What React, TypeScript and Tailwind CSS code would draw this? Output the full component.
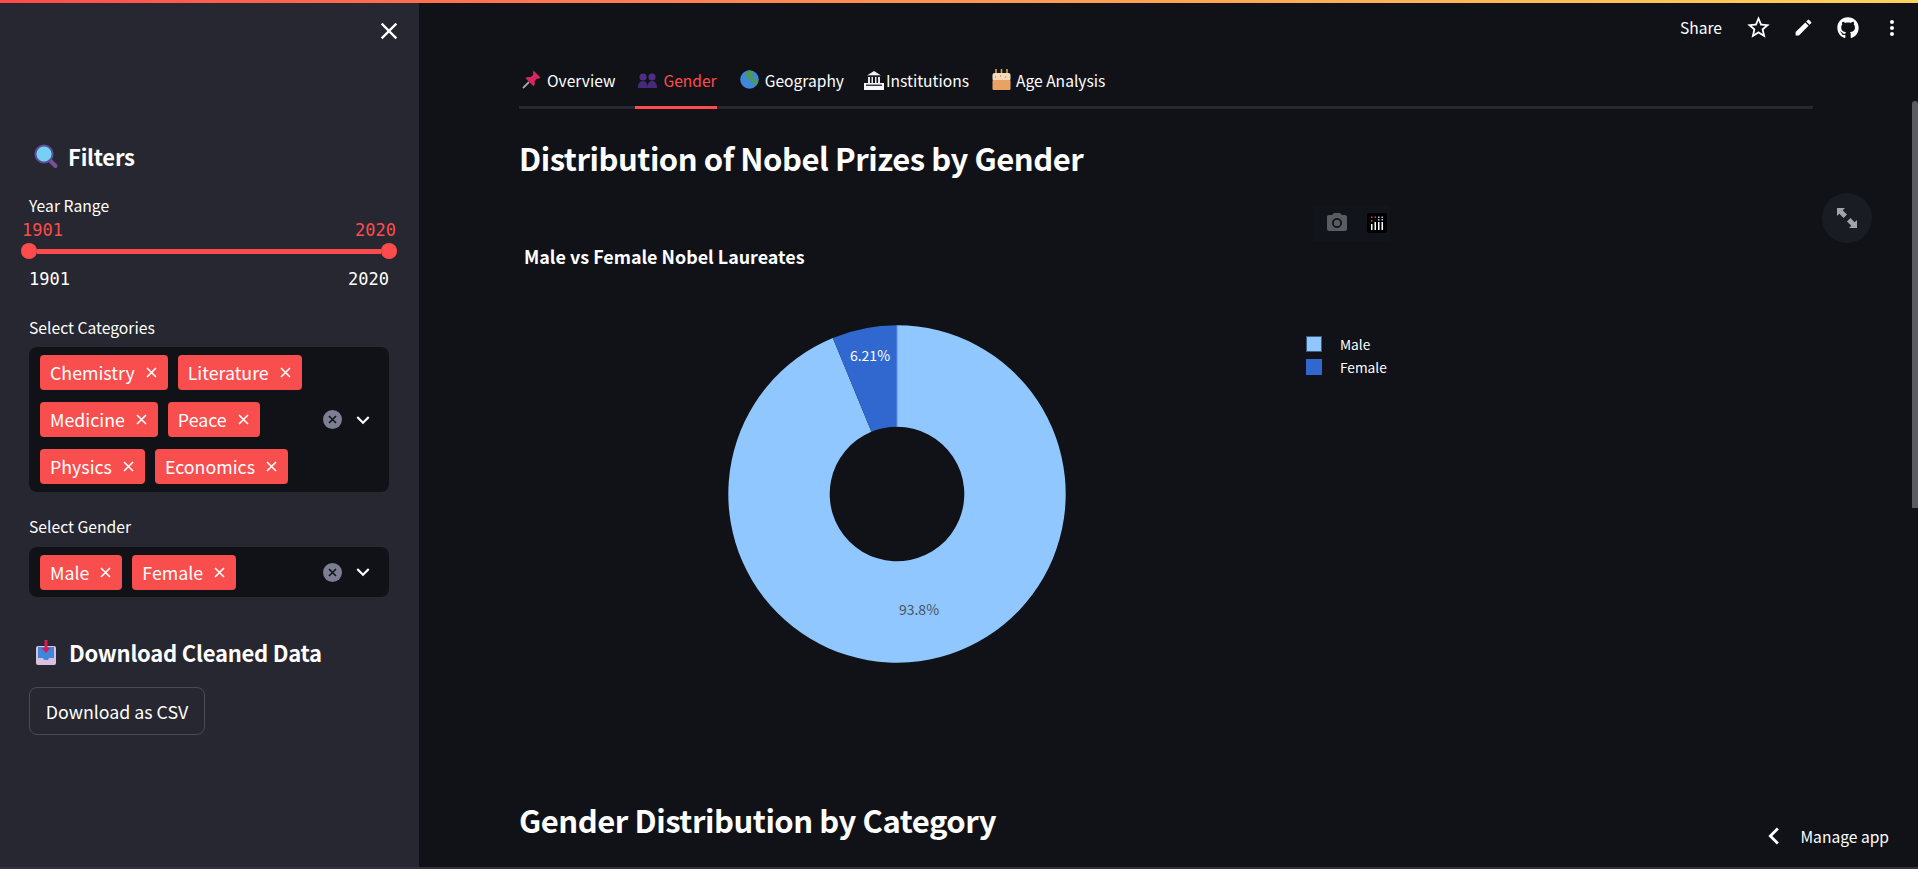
import React from "react";
import { MdClose, MdEdit, MdMoreVert, MdStarBorder, MdPhotoCamera, MdChevronLeft, MdKeyboardArrowDown } from "react-icons/md";
import { FaGithub } from "react-icons/fa";

const Search = () => (
  <svg width="25" height="25" viewBox="0 0 25 25" className="shrink-0">
    <path d="M15.500 16l6 6" stroke="#7a4f96" strokeWidth="4" strokeLinecap="round" />
    <circle cx="10" cy="10" r="8.600" fill="#76d0f1" stroke="#5b4f9e" strokeWidth="2" />
  </svg>
);
const Inbox = () => (
  <svg width="21" height="25" viewBox="0 0 21 25" className="shrink-0">
    <rect x="0" y="6" width="20" height="19" rx="2" fill="#d9bfe0" />
    <path d="M2 7h16v11h-5l-1 2H8l-1-2H2z" fill="#3f86dc" />
    <path d="M8.500 0h3v8h3l-4.500 5-4.500-5h3z" fill="#d01f56" />
  </svg>
);
const Pin = () => (
  <svg width="19" height="19" viewBox="0 0 19 19" className="shrink-0">
    <path d="M1 18l6-6" stroke="#a5a5ab" strokeWidth="1.800" />
    <path d="M11.500 0.500l7 7-2.500 1.500-1-.5-2.500 3c.8 2.200.2 3.500-1 4.800L3.500 8.300c1.300-1.200 2.700-1.800 4.900-1l3-2.500-.5-1z" fill="#d8265e" />
  </svg>
);
const People = () => (
  <svg width="19" height="18" viewBox="0 0 19 18" className="shrink-0">
    <circle cx="5" cy="6" r="3.600" fill="#4f2f86" />
    <circle cx="14" cy="6" r="3.600" fill="#4f2f86" />
    <path d="M0 17c0-5 2-7 5-7s4.500 2 4.500 7zM9.500 17c0-5 1.500-7 4.500-7s5 2 5 7z" fill="#452a78" />
  </svg>
);
const Globe = () => (
  <svg width="19" height="21" viewBox="0 0 19 21" className="shrink-0">
    <circle cx="9.500" cy="10.500" r="9.300" fill="#3f86dc" />
    <path d="M7 2c3-1 6 0 7 2l-2 3 2 3 4 0c0 3-1 5-3 7l-2-4-3-1-2-3-3-1 1-3z" fill="#4d9a58" />
  </svg>
);
const Bank = () => (
  <svg width="20" height="20" viewBox="0 0 20 20" className="shrink-0">
    <path d="M10 1l7 4.500H3z" fill="#f2f2f4" />
    <rect x="3" y="5.500" width="14" height="1" fill="#2c2c34" />
    <path d="M4 7h2v6H4zM7.500 7H9v6H7.500zM11 7h1.500v6H11zM14 7h2v6h-2z" fill="#e6e6ea" />
    <rect x="0" y="13" width="20" height="7" fill="#f8f8fa" />
    <rect x="2" y="14.500" width="16" height="1.500" fill="#3a3a44" />
  </svg>
);
const Cake = () => (
  <svg width="19" height="21" viewBox="0 0 19 21" className="shrink-0">
    <path d="M4 0v4M9.500 0v4M15 0v4" stroke="#d9b24c" strokeWidth="1.500" />
    <rect x="0.500" y="4" width="18" height="8" rx="2" fill="#f3dcb5" />
    <rect x="0.500" y="11" width="18" height="10" rx="1" fill="#e8a364" />
    <path d="M3 8h1M8 7h1M13 8h1" stroke="#d8577a" strokeWidth="1" />
  </svg>
);

const SmallX = () => (
  <svg width="11" height="11" viewBox="0 0 11 11" className="shrink-0">
    <path d="M1 1l9 9M10 1l-9 9" stroke="#fff" strokeWidth="1.600" />
  </svg>
);

const Tag = ({ label }: { label: string }) => (
  <span className="flex items-center h-[35px] rounded-[4px] bg-[#f84e4e] pl-[10px] pr-[11px] gap-[11px] text-white text-[17.800px] leading-[35px]">
    {label}
    <SmallX />
  </span>
);

const ClearAndChevron = () => (
  <div className="flex items-center gap-[8px] pr-[13px] shrink-0">
    <svg width="19" height="19" viewBox="0 0 19 19">
      <circle cx="9.500" cy="9.500" r="9.500" fill="#7c7f91" />
      <path d="M6 6l7 7M13 6l-7 7" stroke="#0e1117" strokeWidth="1.600" />
    </svg>
    <MdKeyboardArrowDown size={26} color="#fff" />
  </div>
);

const SelectBox = ({ labels, cls }: { labels: string[]; cls: string }) => (
  <div className={"flex items-center rounded-[8px] bg-[#101218] pl-[11px] " + cls}>
    <div className="flex flex-wrap flex-1 gap-x-[10px] gap-y-[12px] pr-[10px]">
      {labels.map((l) => (
        <Tag key={l} label={l} />
      ))}
    </div>
    <ClearAndChevron />
  </div>
);

const Tab = ({ icon, label, active, cls }: { icon: React.ReactNode; label: string; active?: boolean; cls: string }) => (
  <div className={"flex items-center h-[54px] pb-[2px] border-b-[3px] -mb-[3px] text-[15.600px] leading-[24px] " + cls + (active ? " border-[#ff4b4b] text-[#ff4b4b]" : " border-transparent text-white")}>
    {icon}
    <span>{label}</span>
  </div>
);

const polar = (r: number, deg: number) => {
  const a = ((deg - 90) * Math.PI) / 180;
  return [169 + r * Math.cos(a), 169 + r * Math.sin(a)];
};
const femaleDeg = 22.36;
const slice = (from: number, to: number) => {
  const [x1, y1] = polar(168.7, from);
  const [x2, y2] = polar(168.7, to);
  const [x3, y3] = polar(67.3, to);
  const [x4, y4] = polar(67.3, from);
  const large = to - from > 180 ? 1 : 0;
  return `M${x1} ${y1}A168.7 168.7 0 ${large} 1 ${x2} ${y2}L${x3} ${y3}A67.3 67.3 0 ${large} 0 ${x4} ${y4}Z`;
};

const Donut = () => (
  <svg width="338" height="338" viewBox="0 0 338 338" className="shrink-0">
    <path d={slice(0, 360 - femaleDeg)} fill="#90c7ff" />
    <path d={slice(360 - femaleDeg, 360)} fill="#3068cf" />
    <path d="M169 0.500V102" stroke="#5f93e2" strokeWidth="1" />
    <text x="142" y="36" textAnchor="middle" fill="#fff" fontSize="14">6.21%</text>
    <text x="191" y="290" textAnchor="middle" fill="#4a5360" fontSize="14">93.8%</text>
  </svg>
);

const PlotlyLogo = () => (
  <svg width="20" height="20" viewBox="0 0 20 20">
    <rect width="20" height="20" rx="2" fill="#000" />
    <path d="M4 11h1.500v6H4zM7.500 9H9v8H7.500zM11 9h1.500v8H11zM14.500 9H16v8h-1.500z" fill="#fff" />
    <path d="M4 3.500h1.500V5H4zM4 7h1.500v1.500H4zM7.500 3.500H9V5H7.500z" fill="#e0306f" />
    <path d="M11 3.500h1.500V5H11zM14.500 3.500H16V5h-1.500zM11 6h1.500v1.500H11zM14.500 6H16v1.500h-1.500z" fill="#b9c6de" />
  </svg>
);

const H2 = ({ children, cls }: { children: React.ReactNode; cls: string }) => (
  <h2 className={"text-[31px] tracking-[-0.45px] leading-[40px] font-semibold text-white " + cls}>{children}</h2>
);

export default function App() {
  return (
    <div className="w-[1918px] h-[869px] overflow-hidden flex flex-col bg-[#101218] text-white font-['Noto_Sans_CJK_SC','Noto_Sans',sans-serif]">
      <div className="h-[3px] shrink-0 bg-gradient-to-r from-[#ff4b4b] to-[#ffd35c]" />
      <div className="flex flex-1 min-h-0 relative">
        <aside className="w-[419px] shrink-0 bg-[#262730] pl-[29px] pr-[30px] flex flex-col">
          <div className="flex justify-end h-[54px] items-center -mr-[14px] pt-[2px]">
            <MdClose size={28} color="#fff" />
          </div>
          <div className="flex items-center gap-[9px] pl-[5px] mt-[84px] h-[30px] text-[22px] tracking-[-0.24px] font-semibold leading-[30px]">
            <Search />
            <span>Filters</span>
          </div>
          <div className="mt-[24px] text-[15.700px] leading-[22px]">Year Range</div>
          <div className="flex justify-between -mx-[7px] mt-[2px] font-['DejaVu_Sans_Mono',monospace] text-[17px] leading-[22px] text-[#ff4b4b]">
            <span>1901</span>
            <span>2020</span>
          </div>
          <div className="flex items-center -mx-[8px] mt-[2px]">
            <div className="w-4 h-4 rounded-full bg-[#ff4b4b] shrink-0" />
            <div className="flex-1 h-[5px] bg-[#ff4b4b]" />
            <div className="w-4 h-4 rounded-full bg-[#ff4b4b] shrink-0" />
          </div>
          <div className="flex justify-between mt-[9px] font-['DejaVu_Sans_Mono',monospace] text-[17px] leading-[22px]">
            <span>1901</span>
            <span>2020</span>
          </div>
          <div className="mt-[27px] mb-[8px] text-[15.700px] leading-[22px]">Select Categories</div>
          <SelectBox labels={["Chemistry", "Literature", "Medicine", "Peace", "Physics", "Economics"]} cls="h-[145px]" />
          <div className="mt-[24px] mb-[9px] text-[15.700px] leading-[22px]">Select Gender</div>
          <SelectBox labels={["Male", "Female"]} cls="h-[50px]" />
          <div className="flex items-center gap-[12px] pl-[7px] mt-[40px] h-[30px] text-[22px] tracking-[-0.24px] font-semibold leading-[30px]">
            <Inbox />
            <span>Download Cleaned Data</span>
          </div>
          <button className="mt-[20px] self-start h-[48px] w-[176px] rounded-[8px] border border-[#4a4b54] bg-[#262730] text-[17.800px] text-white flex items-center justify-center">
            Download as CSV
          </button>
        </aside>

        <main className="flex-1 min-w-0 flex flex-col pr-[105px]">
          <div className="pl-[100px]">
            <div className="h-[52px] -mr-[105px] flex items-center justify-end pr-[18px] pb-[3px]">
              <span className="text-[15.600px] mr-[23px]">Share</span>
              <MdStarBorder size={27} color="#fff" className="mr-[21px]" />
              <MdEdit size={21} color="#fff" className="mr-[23px]" />
              <FaGithub size={22} color="#fff" className="mr-[21px]" />
              <MdMoreVert size={24} color="#fff" className="-mr-[4px]" />
            </div>
            <div className="flex gap-[20px] border-b-[3px] border-[#262730] h-[54px]">
              <Tab icon={<Pin />} label="Overview" cls="pl-[3px] gap-[6px]" />
              <Tab icon={<People />} label="Gender" cls="pl-[3px] gap-[6px]" active />
              <Tab icon={<Globe />} label="Geography" cls="pl-[3px] gap-[6px]" />
              <Tab icon={<Bank />} label="Institutions" cls="gap-[2px]" />
              <Tab icon={<Cake />} label="Age Analysis" cls="pl-[3px] gap-[5px]" />
            </div>
            <H2 cls="mt-[29px]">Distribution of Nobel Prizes by Gender</H2>
            <div className="mt-[66px] pl-[5px] text-[17.900px] leading-[24px] font-bold">Male vs Female Nobel Laureates</div>
            <div className="flex mt-[57px] pl-[209px] items-start">
              <Donut />
              <div className="ml-[240px] mt-[11px] flex flex-col gap-[7px] text-[13.700px] leading-[16px]">
                <div className="flex items-center gap-[18px]">
                  <span className="w-4 h-4 bg-[#90c7ff] border border-[#3f5c80]" />
                  Male
                </div>
                <div className="flex items-center gap-[18px]">
                  <span className="w-4 h-4 bg-[#3068cf]" />
                  Female
                </div>
              </div>
            </div>
            <H2 cls="mt-[137px]">Gender Distribution by Category</H2>
          </div>
        </main>

        <div className="absolute left-[1313px] top-[202px] w-[77px] h-[36px] flex items-center gap-[18px] pl-[12px] bg-[#11141b]">
          <MdPhotoCamera size={24} color="#5b5c60" />
          <PlotlyLogo />
        </div>
        <div className="absolute left-[1822px] top-[190px] w-[50px] h-[50px] rounded-full bg-[#1a1c24] flex items-center justify-center">
          <svg width="20" height="20" viewBox="0 0 20 20" fill="#a3a4a8">
            <path d="M0 0h8L5.700 2.300 10 6.600 6.600 10 2.300 5.700 0 8zM20 20h-8l2.300-2.300L10 13.400 13.400 10l4.300 4.300L20 12z" />
          </svg>
        </div>
        <div className="absolute right-0 top-[98px] w-[6px] h-[407px] rounded-t-[3px] bg-[#5a5c62]" />
        <div className="absolute right-[29px] bottom-[14px] flex items-center text-[15.600px] leading-[24px]">
          <MdChevronLeft size={34} color="#fff" className="mr-[9px]" />
          Manage app
        </div>
      </div>
      <div className="h-[2px] shrink-0 bg-[#32343c]" />
    </div>
  );
}
